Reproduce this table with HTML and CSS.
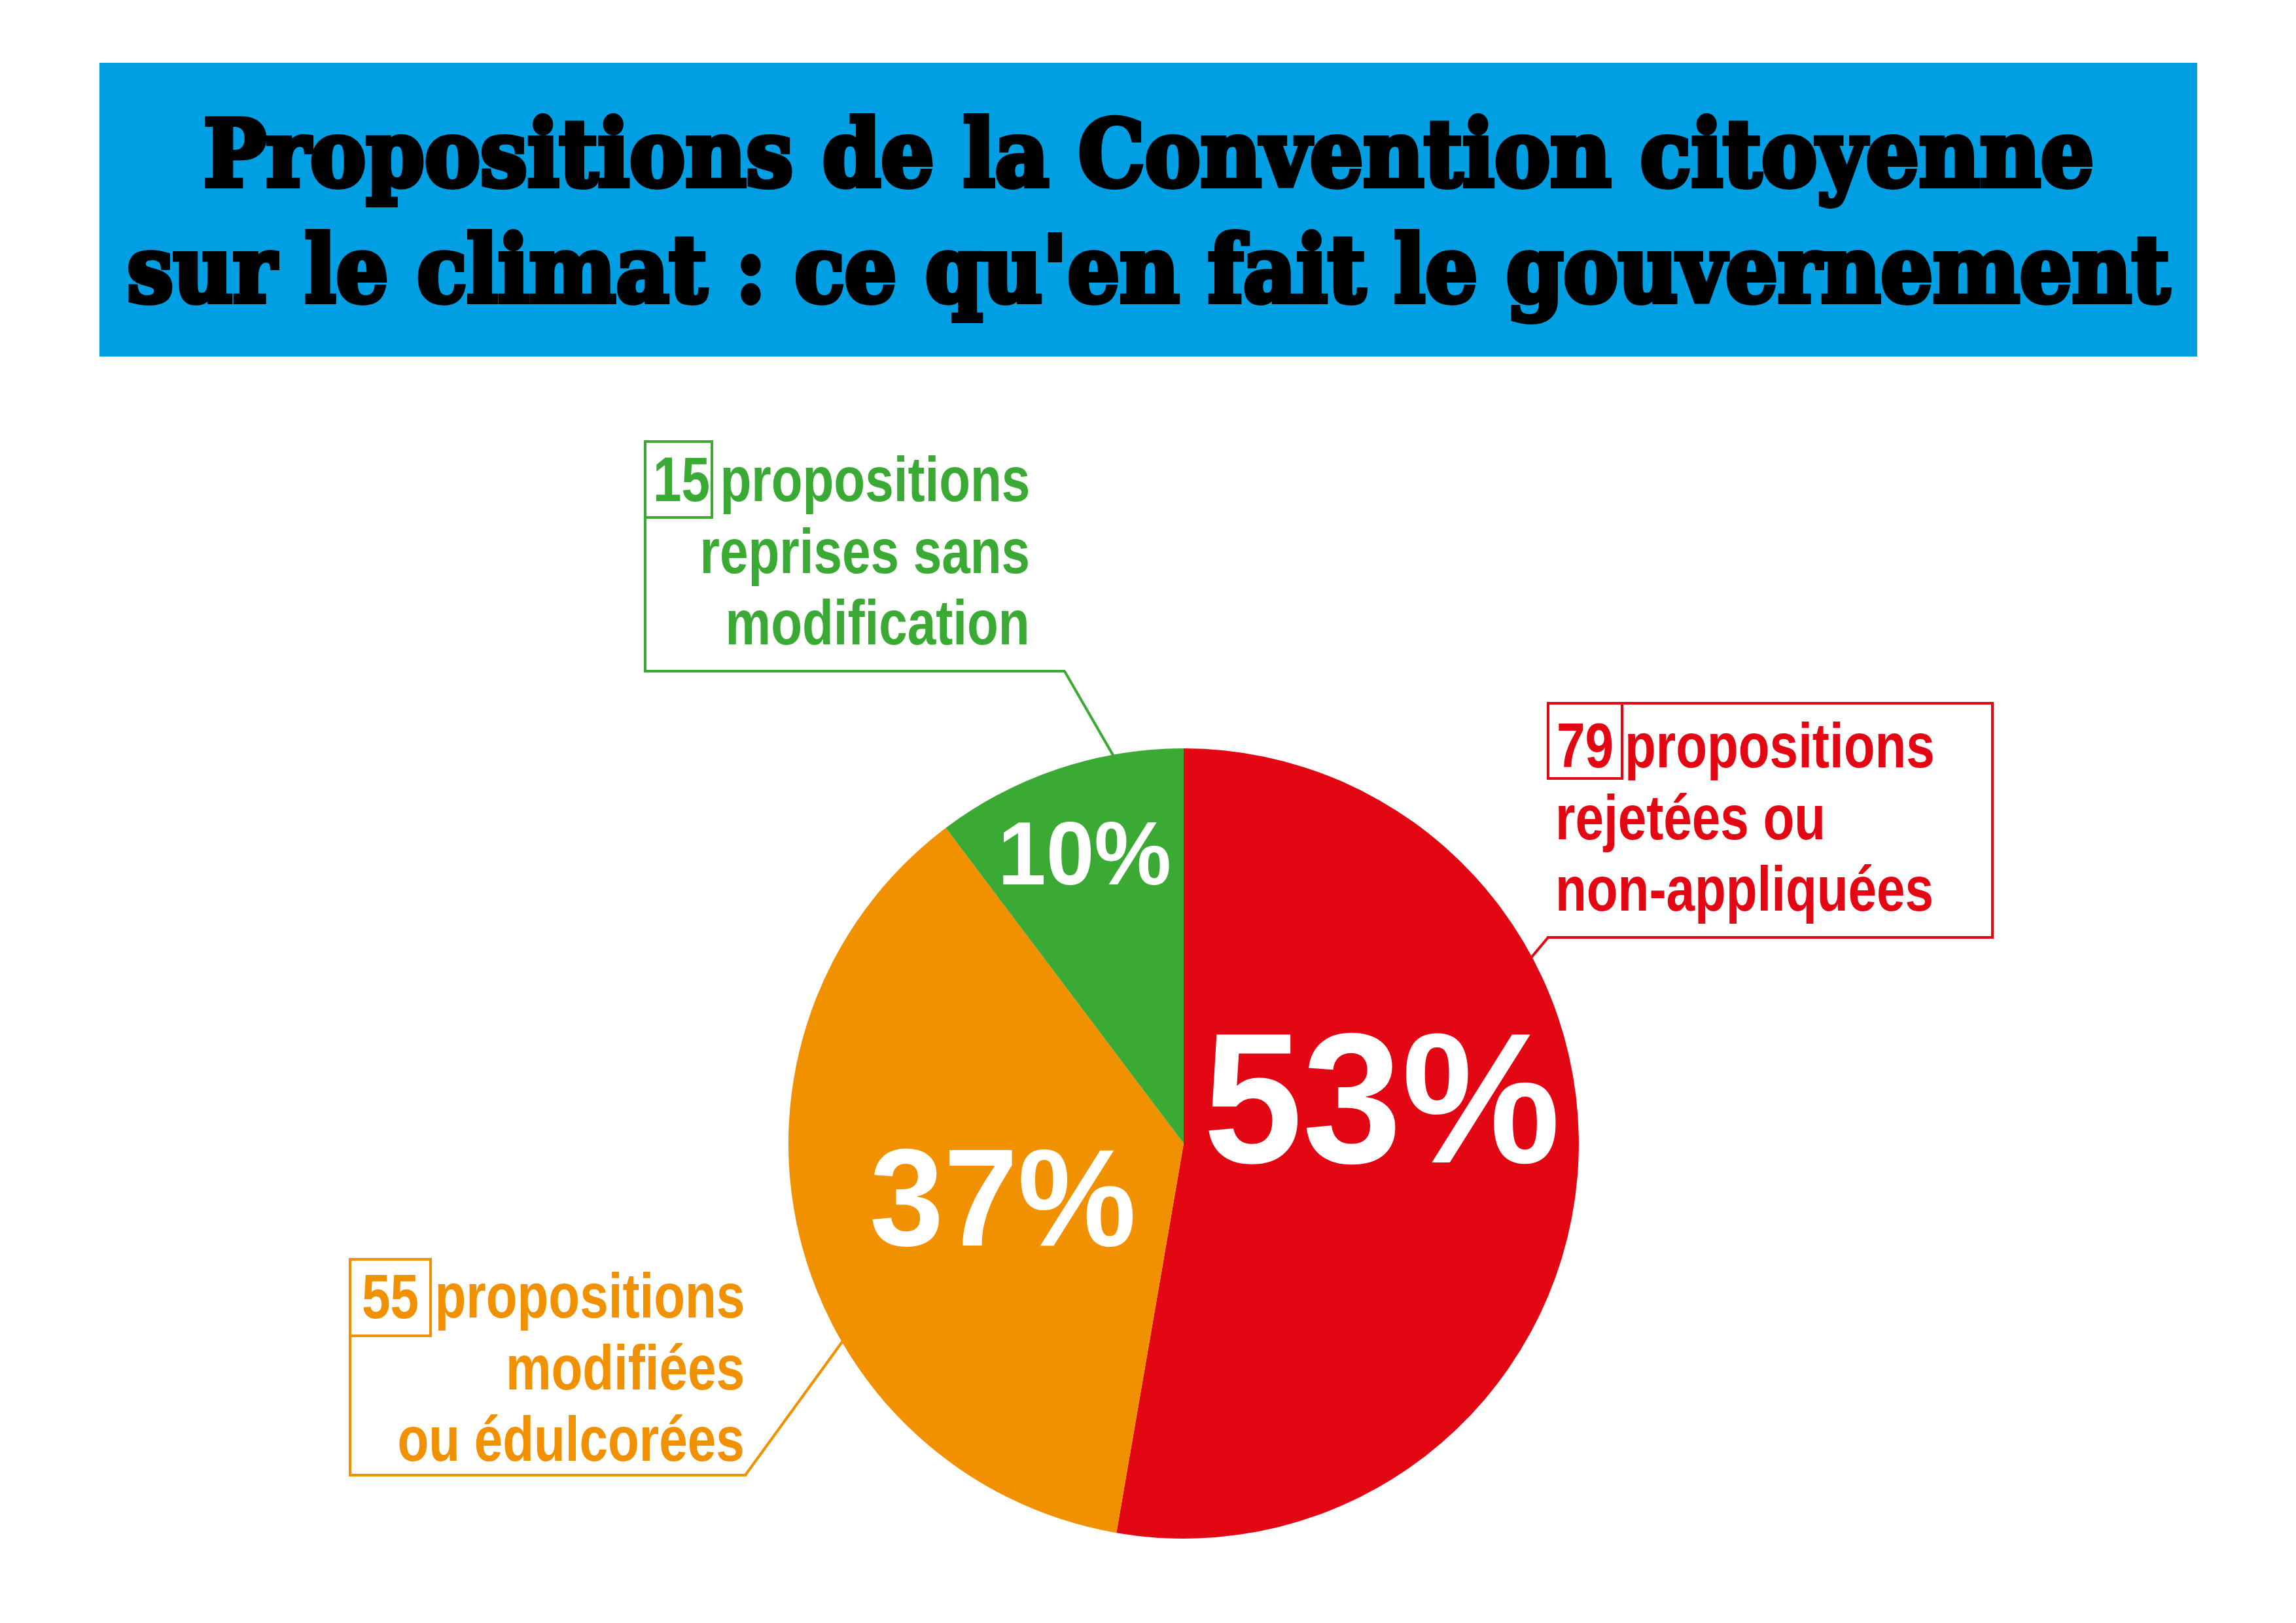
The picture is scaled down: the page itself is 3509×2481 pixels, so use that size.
FILE: index.html
```html
<!DOCTYPE html>
<html lang="fr">
<head>
<meta charset="utf-8">
<title>Propositions de la Convention citoyenne sur le climat</title>
<link rel="stylesheet" href="styles.css">
</head>
<body>
<div class="page">
  <header class="banner">
    <h1 class="title">
      <span class="title-line title-line-1"><span>Propositions de la Convention citoyenne</span></span>
      <span class="title-line title-line-2"><span>sur le climat : ce qu'en fait le gouvernement</span></span>
    </h1>
  </header>

  <section class="chart">
    <svg class="plot" width="3509" height="1936" viewBox="0 545 3509 1936" xmlns="http://www.w3.org/2000/svg">
      <path class="slice-red" d="M1809 1748 L1809 1144 A604 604 0 1 1 1706.2 2343.2 Z"/>
      <path class="slice-orange" d="M1809 1748 L1706.2 2343.2 A604 604 0 0 1 1445.5 1265.6 Z"/>
      <path class="slice-green" d="M1809 1748 L1445.5 1265.6 A604 604 0 0 1 1809 1144 Z"/>
      <line class="leader-green" x1="1627" y1="1026" x2="1702" y2="1156"/>
      <line class="leader-red" x1="2366" y1="1433" x2="2340" y2="1464"/>
      <line class="leader-orange" x1="1139" y1="2255" x2="1288" y2="2050"/>
    </svg>

    <div class="pct pct-53"><span>53%</span></div>
    <div class="pct pct-37"><span>37%</span></div>
    <div class="pct pct-10"><span>10%</span></div>

    <div class="callout callout-green">
      <div class="frame"></div>
      <div class="num"><span>15</span></div>
      <div class="label">
        <div class="ln"><span>propositions</span></div>
        <div class="ln"><span>reprises sans</span></div>
        <div class="ln"><span>modification</span></div>
      </div>
    </div>

    <div class="callout callout-red">
      <div class="frame"></div>
      <div class="num"><span>79</span></div>
      <div class="label">
        <div class="ln ln-first"><span>propositions</span></div>
        <div class="ln"><span>rejetées ou</span></div>
        <div class="ln"><span>non-appliquées</span></div>
      </div>
    </div>

    <div class="callout callout-orange">
      <div class="frame"></div>
      <div class="num"><span>55</span></div>
      <div class="label">
        <div class="ln"><span>propositions</span></div>
        <div class="ln"><span>modifiées</span></div>
        <div class="ln"><span>ou édulcorées</span></div>
      </div>
    </div>
  </section>
</div>
</body>
</html>
```

FILE: styles.css
```css
* { box-sizing: border-box; }

html, body {
  margin: 0;
  padding: 0;
  background: #ffffff;
}

body {
  width: 3509px;
  height: 2481px;
  overflow: hidden;
  font-family: "Liberation Sans", Arial, sans-serif;
}

.page {
  width: 3509px;
  height: 2481px;
}

/* ---------- Banner ---------- */
.banner {
  margin: 96px 0 0 152px;
  width: 3206px;
  height: 449px;
  background: #009fe3;
  padding-top: 51px;
}

.title {
  margin: 0;
  font-family: "DejaVu Serif", "Liberation Serif", serif;
  font-weight: 700;
  font-size: 140px;
  line-height: 177px;
  color: #000000;
  -webkit-text-stroke: 8px #000000;
}

.title-line {
  display: flex;
  justify-content: center;
  height: 177px;
  white-space: nowrap;
}

.title-line span {
  display: block;
  flex: none;
  transform-origin: center;
}

.title-line-1 span { transform: scaleX(0.913); }
.title-line-2 span { transform: scaleX(0.896); }

/* ---------- Chart ---------- */
.chart {
  position: relative;
  height: 1936px;
}

.plot {
  position: absolute;
  left: 0;
  top: 0;
}

.slice-red { fill: #e30613; }
.slice-orange { fill: #f29100; }
.slice-green { fill: #3aaa35; }

.leader-green, .leader-red, .leader-orange {
  stroke-width: 4;
  fill: none;
}
.leader-green { stroke: #3aaa35; }
.leader-red { stroke: #e30613; }
.leader-orange { stroke: #f29100; }

/* percentages inside the pie */
.pct {
  position: absolute;
  color: #ffffff;
  font-weight: 700;
  white-space: nowrap;
}

.pct span {
  display: inline-block;
  transform: scaleX(0.96);
  transform-origin: left center;
}

.pct-53 { left: 1839px; top: 992px; font-size: 284px; line-height: 284px; }
.pct-37 { left: 1329px; top: 1180px; font-size: 212px; line-height: 212px; }
.pct-10 { left: 1525px; top: 690px; font-size: 138px; line-height: 138px; }

/* ---------- Callouts ---------- */
.callout {
  position: absolute;
  font-weight: 700;
  font-size: 96px;
}

.frame {
  position: absolute;
  inset: 0;
  border: 0 solid currentColor;
}

.num {
  position: absolute;
  left: 0;
  top: 0;
  border: 4px solid currentColor;
  text-align: center;
  line-height: 109.5px;
  white-space: nowrap;
}

.num span {
  display: inline-block;
  transform: scaleX(0.815);
  transform-origin: center;
}

.label {
  position: absolute;
  width: 800px;
}

.ln {
  height: 109.5px;
  line-height: 109.5px;
  white-space: nowrap;
}

.ln span {
  display: inline-block;
  transform: scaleX(0.815);
}

/* green */
.callout-green {
  color: #3aaa35;
  left: 984px;
  top: 128px;
  width: 644px;
  height: 355px;
}
.callout-green .frame { border-left-width: 4px; border-bottom-width: 4px; }
.callout-green .num { width: 106px; height: 120px; padding-top: 1px; }
.callout-green .label { right: 54px; top: 5px; text-align: right; }
.callout-green .ln span { transform-origin: right center; }

/* red */
.callout-red {
  color: #e30613;
  left: 2364px;
  top: 528px;
  width: 683px;
  height: 362px;
}
.callout-red .frame { border-top-width: 4px; border-right-width: 4px; border-bottom-width: 4px; }
.callout-red .num { width: 117px; height: 119px; padding-top: 8px; }
.callout-red .label { left: 13px; top: 12px; width: 660px; text-align: left; }
.callout-red .ln span { transform-origin: left center; }
.callout-red .ln-first { padding-left: 106px; }

/* orange */
.callout-orange {
  color: #f29100;
  left: 533px;
  top: 1378px;
  width: 608px;
  height: 334px;
}
.callout-orange .frame { border-left-width: 4px; border-bottom-width: 4px; }
.callout-orange .num { width: 127px; height: 121px; padding-top: 0; }
.callout-orange .label { right: 3px; top: 3px; text-align: right; }
.callout-orange .ln span { transform-origin: right center; }
```
